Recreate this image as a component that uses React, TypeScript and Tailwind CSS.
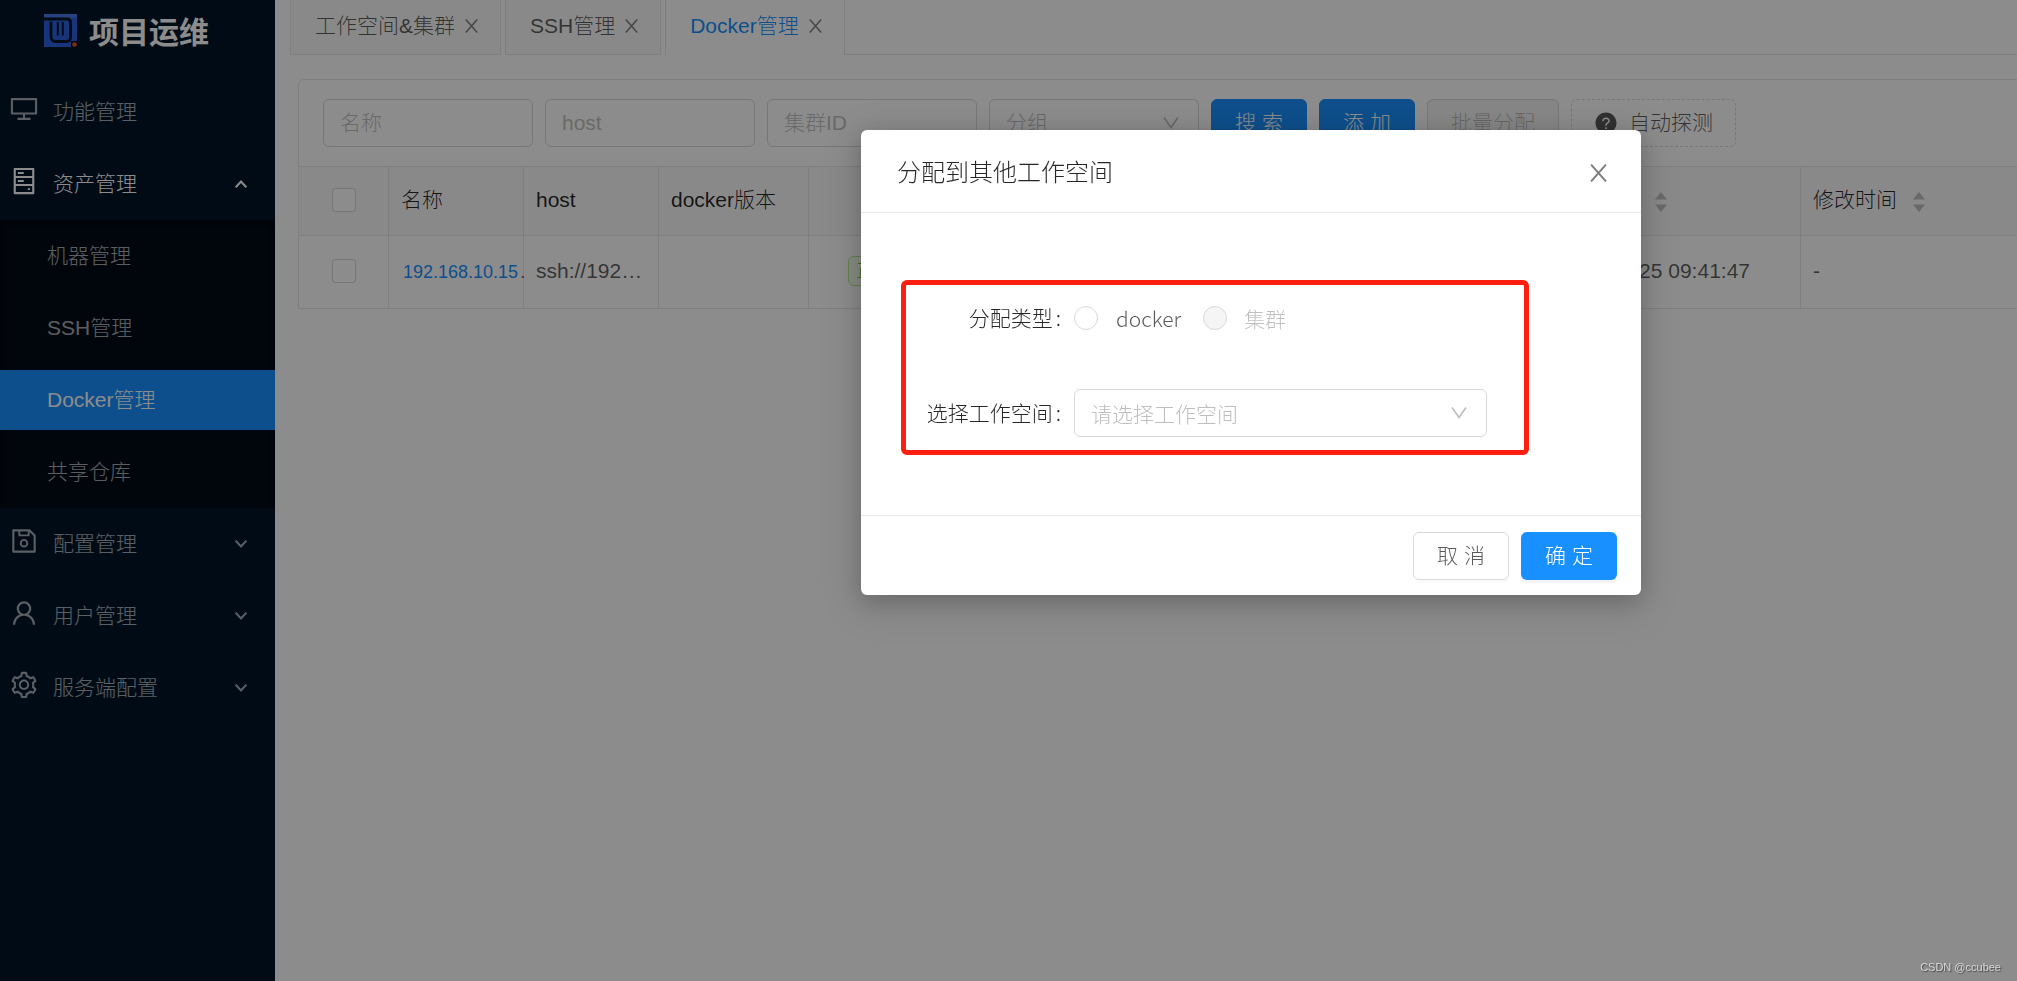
import type { ReactNode } from "react";
import {
  AiFillQuestionCircle,
  AiOutlineDesktop,
  AiOutlineHdd,
  AiOutlineSave,
  AiOutlineSetting,
  AiOutlineUser,
} from "react-icons/ai";
import clsx from "clsx";

const tabs = [
  { title: "工作空间&集群", active: false },
  { title: "SSH管理", active: false },
  { title: "Docker管理", active: true },
];

const assetMenu = ["机器管理", "SSH管理", "Docker管理", "共享仓库"];

function Logo() {
  return (
    <svg viewBox="0 0 33 33" className="size-[33px]" aria-hidden="true">
      <path d="M0 0H33V27H27V33H0Z" fill="#2d62e0" />
      <path d="M0 0H33V3.500H0Z" fill="#4a78e6" />
      <path
        d="M0 5H23Q26.500 5 26.500 8.500V23Q26.500 27.500 22 27.500H12Q7 27.500 7 22.500V7.500"
        fill="none"
        stroke="#001529"
        strokeWidth="2.800"
      />
      <path d="M13.800 8V21.500M18.800 8V21.500" fill="none" stroke="#001529" strokeWidth="2" />
      <circle cx="30.500" cy="30.500" r="2.300" fill="#e8590c" />
    </svg>
  );
}

function CloseIcon({ className }: { className: string }) {
  return (
    <svg viewBox="0 0 16 17" className={className} fill="none" stroke="currentColor" strokeWidth="1.800" aria-hidden="true">
      <path d="M1 0.500L15 16.500M15 0.500L1 16.500" />
    </svg>
  );
}

// thin open arrow used by the selects
function SelectArrow() {
  return (
    <svg
      viewBox="0 0 16 12"
      className="pointer-events-none absolute top-[18px] right-5 h-3 w-4 text-[#bfbfbf]"
      fill="none"
      stroke="currentColor"
      strokeWidth="1.700"
      aria-hidden="true"
    >
      <path d="M1 0.500L8 10.500L15 0.500" />
    </svg>
  );
}

function MenuArrow({ open }: { open: boolean }) {
  return (
    <svg viewBox="0 0 12 8" className="h-2 w-3" fill="none" stroke="currentColor" strokeWidth="2" aria-hidden="true">
      <path d={open ? "M0.700 7.300L6 1.500L11.300 7.300" : "M0.700 0.700L6 6.500L11.300 0.700"} />
    </svg>
  );
}

function Sorter() {
  return (
    <svg viewBox="0 0 12 20" className="mt-1 h-5 w-3 text-[#bfbfbf]" fill="currentColor" aria-hidden="true">
      <path d="M6 0L12 7.500H0Z" />
      <path d="M6 20L12 12.500H0Z" />
    </svg>
  );
}

function MenuRow({ icon, title, open }: { icon: ReactNode; title: string; open?: boolean }) {
  return (
    <button
      type="button"
      className={clsx(
        "my-[6px] flex h-[60px] w-full items-center pr-7 pl-[9px]",
        open ? "text-white" : "text-white/65"
      )}
    >
      <span className="mr-[14px] pb-[6px] text-[30px]">{icon}</span>
      <span className="flex-1 text-left">{title}</span>
      {open === undefined ? null : <MenuArrow open={open} />}
    </button>
  );
}

function Sidebar() {
  return (
    <aside className="w-[275px] shrink-0 bg-[#001529]">
      <div className="flex h-[76px] items-start gap-3 pt-[14px] pl-11">
        <Logo />
        <h1 className="text-[30px] leading-[38px] font-bold text-white">项目运维</h1>
      </div>
      <nav className="flex flex-col">
        <MenuRow icon={<AiOutlineDesktop />} title="功能管理" />
        <MenuRow icon={<AiOutlineHdd />} title="资产管理" open />
        <ul className="flex flex-col gap-3 bg-[#000c17] py-[6px] shadow-[inset_0_3px_12px_rgba(0,0,0,0.45)]">
          {assetMenu.map((item) => (
            <li key={item}>
              <a
                href="#"
                className={clsx(
                  "flex h-[60px] items-center pl-[47px]",
                  item === "Docker管理" ? "bg-[#1890ff] text-white" : "text-white/65"
                )}
              >
                {item}
              </a>
            </li>
          ))}
        </ul>
        <MenuRow icon={<AiOutlineSave />} title="配置管理" open={false} />
        <MenuRow icon={<AiOutlineUser />} title="用户管理" open={false} />
        <MenuRow icon={<AiOutlineSetting />} title="服务端配置" open={false} />
      </nav>
    </aside>
  );
}

function TabBar() {
  return (
    <div className="flex h-[55px] gap-1 pl-[15px]" role="tablist">
      {tabs.map((tab) => (
        <div
          key={tab.title}
          role="tab"
          aria-selected={tab.active}
          className={clsx(
            "flex items-center gap-[10px] border-x border-[#e8e8e8] pr-[22px] pb-[3px] pl-6",
            tab.active ? "text-[#1890ff]" : "border-b bg-[#fafafa]"
          )}
        >
          {tab.title}
          <button type="button" aria-label="关闭" className="text-black/50">
            <CloseIcon className="h-[14px] w-[13px]" />
          </button>
        </div>
      ))}
      <div className="-ml-1 flex-1 border-b border-[#e8e8e8]" />
    </div>
  );
}

const fieldClass =
  "h-12 w-[210px] shrink-0 rounded-md border border-[#d9d9d9] bg-white px-4 placeholder:text-[#bfbfbf]";
const buttonClass = "h-12 shrink-0 rounded-md border";

function Filters() {
  return (
    <form className="flex gap-3 px-6 py-[19px]">
      <input className={fieldClass} placeholder="名称" aria-label="名称" />
      <input className={fieldClass} placeholder="host" aria-label="host" />
      <input className={fieldClass} placeholder="集群ID" aria-label="集群ID" />
      <div className="relative shrink-0">
        <select className={clsx(fieldClass, "appearance-none text-[#bfbfbf]")} aria-label="分组">
          <option>分组</option>
        </select>
        <SelectArrow />
      </div>
      <button type="button" className={clsx(buttonClass, "w-24 border-[#1890ff] bg-[#1890ff] text-white")}>
        搜 索
      </button>
      <button type="button" className={clsx(buttonClass, "w-24 border-[#1890ff] bg-[#1890ff] text-white")}>
        添 加
      </button>
      <button
        type="button"
        disabled
        className={clsx(buttonClass, "w-[132px] border-[#d9d9d9] bg-[#f5f5f5] text-black/25")}
      >
        批量分配
      </button>
      <button
        type="button"
        className={clsx(
          buttonClass,
          "flex w-[165px] items-center justify-center gap-[11px] border-dashed border-[#d9d9d9]"
        )}
      >
        <AiFillQuestionCircle className="size-6" />
        自动探测
      </button>
    </form>
  );
}

const cell = "border-t border-r border-[#e8e8e8] px-3 pb-[2px] text-left font-light whitespace-nowrap";

function Check({ label }: { label: string }) {
  return (
    <input
      type="checkbox"
      aria-label={label}
      className="mx-auto block size-6 appearance-none rounded-[3px] border border-[#d9d9d9] bg-white"
    />
  );
}

function DockerTable() {
  return (
    <table className="w-full table-fixed border-separate border-spacing-0 border-b border-[#e8e8e8]">
      <colgroup>
        <col className="w-[90px]" />
        <col className="w-[135px]" />
        <col className="w-[135px]" />
        <col className="w-[150px]" />
        <col className="w-[132px]" />
        <col />
        <col className="w-[258px]" />
        <col className="w-[258px]" />
      </colgroup>
      <thead>
        <tr className="h-[69px] bg-[#fafafa] text-black/85">
          <th className={cell}>
            <Check label="全选" />
          </th>
          <th className={cell}>名称</th>
          <th className={cell}>host</th>
          <th className={cell}>docker版本</th>
          <th className={cell}></th>
          <th className={cell}></th>
          <th className={cell}>
            <span className="flex items-center gap-4">
              创建时间
              <Sorter />
            </span>
          </th>
          <th className={cell}>
            <span className="flex items-center gap-4">
              修改时间
              <Sorter />
            </span>
          </th>
        </tr>
      </thead>
      <tbody>
        <tr className="h-[73px]">
          <td className={cell}>
            <Check label="192.168.10.15" />
          </td>
          <td className={clsx(cell, "pr-0")}>
            <a href="#" className="mr-[2px] pl-[2px] text-lg text-[#1890ff]">
              192.168.10.15
            </a>
            <span className="text-lg">.</span>
          </td>
          <td className={cell}>ssh://192…</td>
          <td className={cell}></td>
          <td className={cell}>
            <div className="flex justify-center">
              <span className="rounded-md border border-[#b7eb8f] bg-[#f6ffed] px-2 text-lg text-[#52c41a]">正常</span>
            </div>
          </td>
          <td className={cell}></td>
          <td className={cell}>2023-12-25 09:41:47</td>
          <td className={cell}>-</td>
        </tr>
      </tbody>
    </table>
  );
}

const labelClass = "flex w-[153px] justify-end gap-[3px] pr-[13px] pb-[2px] text-black/85";

function AssignDialog() {
  return (
    <div className="fixed inset-0 flex items-start justify-center overflow-hidden bg-black/45 pt-[130px] pl-[485px]">
      <div
        role="dialog"
        aria-labelledby="assign-title"
        className="w-[780px] rounded-md bg-white shadow-[0_9px_42px_12px_rgba(0,0,0,0.09),0_6px_24px_rgba(0,0,0,0.2)]"
      >
        <header className="flex h-[83px] items-center justify-between border-b border-[#e8e8e8] pt-[3px] pr-[34px] pl-9">
          <h2 id="assign-title" className="text-2xl text-black/85">
            分配到其他工作空间
          </h2>
          <button type="button" aria-label="关闭" className="text-black/50">
            <CloseIcon className="h-[18px] w-[17px]" />
          </button>
        </header>
        <div className="h-[302px] pt-[67px] pl-10">
          <form className="w-[628px] rounded-md border-5 border-[#ff1f10] pt-[9px] pr-[37px] pb-[13px] pl-[15px] font-['Noto_Sans_CJK_SC',sans-serif]">
            <div role="radiogroup" aria-labelledby="assign-type" className="mb-[47px] flex h-12 items-center">
              <span id="assign-type" className={labelClass}>
                分配类型<span>:</span>
              </span>
              <label className="flex items-center gap-[18px]">
                <input
                  type="radio"
                  name="type"
                  className="size-6 appearance-none rounded-full border border-[#d9d9d9]"
                />
                docker
              </label>
              <label className="ml-[22px] flex items-center gap-[17px] text-black/25">
                <input
                  type="radio"
                  name="type"
                  disabled
                  className="size-6 appearance-none rounded-full border border-[#d9d9d9] bg-[#f5f5f5]"
                />
                集群
              </label>
            </div>
            <div className="flex h-12 items-center">
              <label htmlFor="workspace" className={labelClass}>
                选择工作空间<span>:</span>
              </label>
              <div className="relative flex-1">
                <select
                  id="workspace"
                  className="block h-12 w-full appearance-none rounded-md border border-[#d9d9d9] px-4 text-[#bfbfbf]"
                >
                  <option>请选择工作空间</option>
                </select>
                <SelectArrow />
              </div>
            </div>
          </form>
        </div>
        <footer className="flex justify-end gap-3 border-t border-[#e8e8e8] px-6 pt-4 pb-[15px]">
          <button
            type="button"
            className="h-12 w-24 rounded-md border border-[#d9d9d9] shadow-[0_3px_0_rgba(0,0,0,0.02)]"
          >
            取 消
          </button>
          <button
            type="button"
            className="h-12 w-24 rounded-md bg-[#1890ff] text-white shadow-[0_3px_0_rgba(0,0,0,0.045)]"
          >
            确 定
          </button>
        </footer>
      </div>
    </div>
  );
}

export default function App() {
  return (
    <div className="flex min-h-screen overflow-hidden bg-white font-['Liberation_Sans','Noto_Sans_CJK_SC',sans-serif] text-[21px] leading-8 font-light text-black/65">
      <Sidebar />
      <div className="min-w-0 flex-1">
        <TabBar />
        <main className="-mr-[42px] pt-6 pl-[23px]">
          <section className="rounded-tl-md border-t border-l border-[#e8e8e8]">
            <Filters />
            <DockerTable />
          </section>
        </main>
      </div>
      <AssignDialog />
      <div className="fixed right-4 bottom-[6px] text-[11px] leading-4 text-white/70 [text-shadow:1px_1px_1px_rgba(0,0,0,0.5)]">
        CSDN @ccubee
      </div>
    </div>
  );
}
